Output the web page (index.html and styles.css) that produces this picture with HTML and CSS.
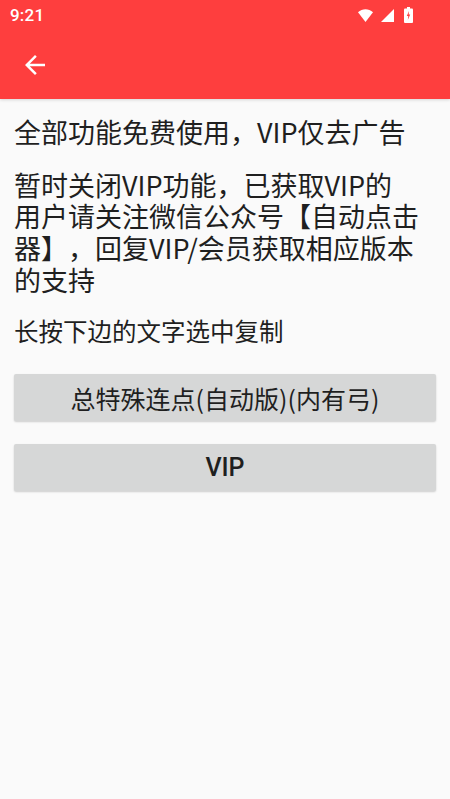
FILE: index.html
```html
<!DOCTYPE html>
<html lang="zh-CN">
<head>
<meta charset="utf-8">
<title>VIP</title>
<link rel="stylesheet" href="styles.css">
</head>
<body>
<div class="screen">
  <header class="appbar">
    <div class="statusbar">
      <span class="time">9:21</span>
      <div class="status-icons">
        <svg class="wifi" width="15" height="13" viewBox="0 0 15 13"><path d="M7.5 13 L0 3.2 C4.3 -0.9 10.7 -0.9 15 3.2 Z" fill="#fff"/></svg>
        <svg class="signal" width="13" height="13" viewBox="0 0 13 13"><path d="M0 13 L13 0 L13 13 Z" fill="#fff"/></svg>
        <svg class="battery" width="9" height="16" viewBox="0 0 9 16"><rect x="3" y="0" width="3" height="2" fill="#fff"/><rect x="0" y="1.5" width="9" height="14.5" rx="1" fill="#fff"/><path d="M5 4 L2.8 9 L4.3 9 L3.8 13 L6.2 7.5 L4.7 7.5 Z" fill="#fe3e3e"/></svg>
      </div>
    </div>
    <div class="toolbar">
      <svg class="back" width="30" height="30" viewBox="0 0 24 24"><path d="M20 11H7.83l5.59-5.59L12 4l-8 8 8 8 1.41-1.41L7.83 13H20v-2z" fill="#fff"/></svg>
    </div>
  </header>
  <main class="content">
    <p class="big">全部功能免费使用，VIP仅去广告</p>
    <p class="big">暂时关闭VIP功能，已获取VIP的<br>用户请关注微信公众号【自动点击器】，回复VIP/会员获取相应版本的支持</p>
    <p class="small">长按下边的文字选中复制</p>
    <div class="buttons">
      <button class="btn">总特殊连点(自动版)(内有弓)</button>
      <button class="btn btn-vip">VIP</button>
    </div>
  </main>
</div>
</body>
</html>
```

FILE: styles.css
```css
* { box-sizing: border-box; }
html, body {
  margin: 0;
  padding: 0;
  background: #fafafa;
}
body {
  font-family: Roboto, "Noto Sans CJK SC", sans-serif;
  color: #1f1f1f;
  text-spacing-trim: space-all;
}
.screen {
  width: 450px;
  min-height: 799px;
  display: flex;
  flex-direction: column;
}
.appbar {
  background: #fe3e3e;
  box-shadow: 0 1px 3px rgba(0,0,0,0.15);
}
.statusbar {
  height: 30px;
  display: flex;
  align-items: center;
  justify-content: space-between;
  padding: 0 37px 0 10px;
}
.time {
  color: #fff;
  font-size: 17px;
  font-weight: 500;
  letter-spacing: 0.2px;
}
.status-icons {
  display: flex;
  align-items: center;
  gap: 8px;
}
.signal { margin-right: 2px; }
.toolbar {
  height: 69px;
  display: flex;
  align-items: center;
  padding-left: 20px;
}
.back { display: block; }
.content {
  padding: 17px 14px 0 14px;
  display: flex;
  flex-direction: column;
}
.content p { margin: 0; }
.big {
  font-family: "Noto Sans CJK SC", sans-serif;
  font-size: 27px;
  line-height: 31.7px;
  margin-bottom: 21px !important;
  text-spacing-trim: space-all;
}
.small {
  font-family: "Noto Sans CJK SC", sans-serif;
  font-size: 24.5px;
  line-height: 28.7px;
}
.buttons {
  margin-top: 29px;
  display: flex;
  flex-direction: column;
  gap: 23px;
}
.btn {
  height: 47px;
  border: none;
  border-radius: 2px;
  background: #d6d7d7;
  box-shadow: 0 1px 2px rgba(0,0,0,0.18);
  font-family: "Noto Sans CJK SC", sans-serif;
  font-size: 25px;
  color: #1f1f1f;
  padding: 0;
}
.btn-vip {
  font-family: Roboto, "Noto Sans CJK SC", sans-serif;
  font-weight: 500;
  font-size: 25px;
}
```
